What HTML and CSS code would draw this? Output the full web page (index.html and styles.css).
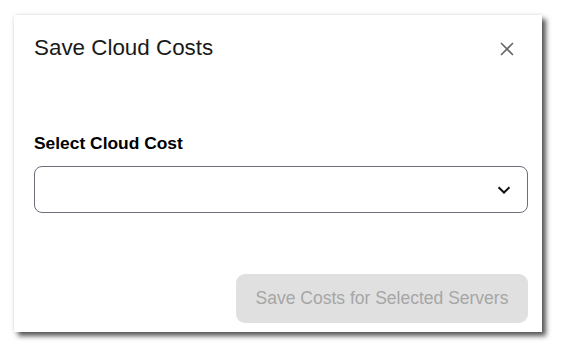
FILE: index.html
```html
<!DOCTYPE html>
<html>
<head>
<meta charset="utf-8">
<link rel="stylesheet" href="styles.css">
</head>
<body>
<div class="dialog">
  <div class="header">
    <h1 class="title">Save Cloud Costs</h1>
    <button class="close" aria-label="Close">
      <svg width="14" height="14" viewBox="0 0 14 14"><path d="M1 1L13 13M13 1L1 13" stroke="#666" stroke-width="1.6" fill="none"/></svg>
    </button>
  </div>
  <div class="body">
    <label class="label">Select Cloud Cost</label>
    <div class="select">
      <svg width="14" height="8" viewBox="0 0 14 8"><path d="M1.5 1.2L7 6.5L12.5 1.2" stroke="#111" stroke-width="2" fill="none"/></svg>
    </div>
  </div>
  <div class="footer">
    <button class="save" disabled>Save Costs for Selected Servers</button>
  </div>
</div>
</body>
</html>
```
FILE: styles.css
```css
html, body { margin: 0; padding: 0; background: #fff; }
body {
  padding: 15px 0 25px 14px;
  min-height: 357px;
  box-sizing: border-box;
  font-family: "Liberation Sans", Arial, sans-serif;
}
.dialog {
  width: 528px;
  height: 317px;
  box-sizing: border-box;
  background: #fff;
  box-shadow: 4px 4px 5px rgba(0,0,0,0.65), 0 0 4px rgba(0,0,0,0.12);
  padding: 21px 14px 9px 20px;
  display: flex;
  flex-direction: column;
}
.header { display: flex; align-items: center; justify-content: space-between; height: 24px; }
.title { margin: 0; font-size: 22.4px; font-weight: normal; color: #1a1a1a; line-height: 24px; }
.close { border: none; background: none; padding: 0; margin-right: 14px; width: 14px; height: 14px; display: flex; margin-top: 2px; }
.body { padding-top: 73px; display: flex; flex-direction: column; }
.label { font-size: 17.4px; font-weight: bold; color: #000; line-height: 20px; }
.select {
  margin-top: 13px;
  height: 47px;
  box-sizing: border-box;
  border: 1px solid #6e6e7a;
  border-radius: 8px;
  display: flex;
  align-items: center;
  justify-content: flex-end;
  padding-right: 16px;
}
.footer { margin-top: auto; display: flex; justify-content: flex-end; }
.save {
  width: 292px; height: 49px;
  border: none; border-radius: 9px;
  background: #e0e0e0; color: #a6a6a6;
  font-family: "Liberation Sans", Arial, sans-serif; font-size: 17.5px;
}
```
